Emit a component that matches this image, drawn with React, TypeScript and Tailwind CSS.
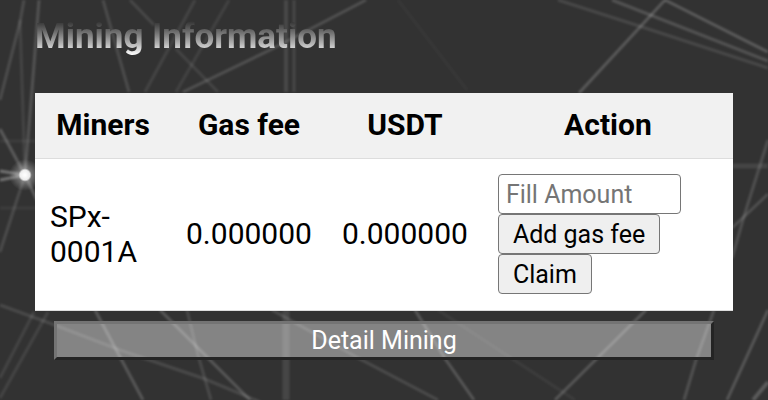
import React from 'react';

const lines = [
  // top left
  { d: 'M24 0 L20 22 L0 100', w: 3, o: 0.15 },
  { d: 'M20 20 L25 175', w: 3, o: 0.1 },
  { d: 'M39 0 L32 90 L25 175', w: 3, o: 0.18 },
  { d: 'M103 0 L129 92', w: 3, o: 0.14 },
  { d: 'M130 0 L154 25', w: 3, o: 0.12 },
  { d: 'M176 49 L218 92', w: 3, o: 0.1 },
  { d: 'M195 0 L145 92', w: 3, o: 0.1 },
  { d: 'M229 0 L176 92', w: 3, o: 0.09 },
  { d: 'M366 0 L270 50 L183 92', w: 3, o: 0.17 },
  { d: 'M286 0 V92', w: 4, o: 0.12 },
  { d: 'M294 0 V92', w: 3, o: 0.12 },
  // top right
  { d: 'M398 0 L467 90', w: 3, o: 0.03 },
  { d: 'M665 0 L579 93', w: 3, o: 0.21 },
  { d: 'M665 0 L768 52', w: 3, o: 0.22 },
  { d: 'M612 0 L768 61', w: 3, o: 0.18 },
  { d: 'M558 0 L636 25 L768 68', w: 3, o: 0.12 },
  // left edge
  { d: 'M0 129 L25 175 L37 200', w: 3, o: 0.22 },
  { d: 'M0 171 L25 175 L0 180', w: 3, o: 0.35 },
  { d: 'M25 175 L0 252', w: 3, o: 0.14 },
  { d: 'M0 141 H36 M0 208 H36', w: 3, o: 0.06 },
  // right edge
  { d: 'M732 166 H768', w: 5, o: 0.1 },
  { d: 'M768 140 L745 213 L732 258', w: 3, o: 0.16 },
  { d: 'M768 194 L732 228', w: 3, o: 0.16 },
  // bottom
  { d: 'M0 305 L52 324 L120 350 L205 379 L260 402', w: 3, o: 0.13 },
  { d: 'M34 312 L0 378', w: 3, o: 0.1 },
  { d: 'M48 312 L0 398', w: 3, o: 0.1 },
  { d: 'M95 310 L120 357 L143 400', w: 3, o: 0.2 },
  { d: 'M160 310 L208 358 L250 400', w: 3, o: 0.2 },
  { d: 'M187 310 L198 355 L211 400', w: 3, o: 0.13 },
  { d: 'M286 310 V400', w: 7, o: 0.11 },
  { d: 'M272 310 L360 359 L438 400', w: 3, o: 0.14 },
  { d: 'M415 310 L446 360 L474 400', w: 3, o: 0.2 },
  { d: 'M438 310 L575 400', w: 3, o: 0.06 },
  { d: 'M646 310 L555 400', w: 3, o: 0.2 },
  { d: 'M714 310 L696 360 L684 400', w: 3, o: 0.17 },
  { d: 'M768 310 L727 400', w: 3, o: 0.2 },
  { d: 'M768 382 L753 400', w: 4, o: 0.22 },
];

const Backdrop = () => {
  return (
    <svg
      className="absolute inset-0 w-full h-full"
      viewBox="0 0 768 400"
      preserveAspectRatio="xMidYMid slice"
      fill="none"
      stroke="#fff"
      aria-hidden="true"
    >
      <defs>
        <radialGradient id="glow">
          <stop offset="0" stopColor="#fff" />
          <stop offset="0.3" stopColor="#fff" stopOpacity="0.9" />
          <stop offset="0.42" stopColor="#fff" stopOpacity="0.3" />
          <stop offset="1" stopColor="#fff" stopOpacity="0" />
        </radialGradient>
        <filter id="soft" filterUnits="userSpaceOnUse" x="0" y="0" width="768" height="400">
          <feGaussianBlur stdDeviation="0.8" />
        </filter>
      </defs>
      <g filter="url(#soft)" opacity="0.9">
        {lines.map((line) => (
          <path key={line.d} d={line.d} strokeWidth={line.w} strokeOpacity={line.o} />
        ))}
      </g>
      <circle cx="25" cy="175" r="16" fill="url(#glow)" stroke="none" />
    </svg>
  );
};

const miners = [{ name: 'SPx-0001A', gasFee: '0.000000', usdt: '0.000000' }];

const App = () => {
  return (
    <main className="relative min-h-screen bg-[#323232] font-['Roboto',sans-serif] text-black">
      <Backdrop />
      <div className="relative px-[35px] pt-[17px]">
        <h2 className="w-fit text-[35px] leading-10 font-bold text-transparent bg-clip-text bg-linear-to-b from-[#323232] from-10% to-white to-95%">
          Mining Information
        </h2>
        <table className="mt-9 w-full bg-white text-[30px] leading-[35px]">
          <thead>
            <tr className="bg-[#f1f1f1] border-b border-[#dddddd]">
              <th className="px-[15px] pt-[14px] pb-4 w-[136px]">Miners</th>
              <th className="px-[15px] pt-[14px] pb-4 w-[155px]">Gas fee</th>
              <th className="px-[15px] pt-[14px] pb-4 w-[155px]">USDT</th>
              <th className="px-[15px] pt-[14px] pb-4">Action</th>
            </tr>
          </thead>
          <tbody>
            {miners.map((miner) => (
              <tr key={miner.name} className="border-b border-[#dddddd]">
                <td className="px-[15px] pt-[14px] pb-4">{miner.name}</td>
                <td className="px-[15px] pt-[14px] pb-4">{miner.gasFee}</td>
                <td className="px-[15px] pt-[14px] pb-4">{miner.usdt}</td>
                <td className="px-[15px] pt-[15px] pb-4">
                  <div className="flex flex-col items-start text-[25px]">
                    <input
                      type="text"
                      aria-label="Fill Amount"
                      placeholder="Fill Amount"
                      className="w-[183px] h-10 px-[7px] border border-[#767676] rounded bg-white placeholder:text-[#757575]"
                    />
                    <button type="button" className="h-10 px-[14px] border border-[#767676] rounded bg-[#efefef]">
                      Add gas fee
                    </button>
                    <button type="button" className="h-10 px-[14px] border border-[#767676] rounded bg-[#efefef]">
                      Claim
                    </button>
                  </div>
                </td>
              </tr>
            ))}
          </tbody>
        </table>
        <div className="px-[19px] pt-[10px]">
          <button
            type="button"
            className="block w-full h-[39px] border-3 border-t-[#747474] border-l-[#747474] border-r-[#242424] border-b-[#242424] bg-white/40 bg-clip-padding text-[25px] leading-8 text-white"
          >
            Detail Mining
          </button>
        </div>
      </div>
    </main>
  );
};

export default App;
